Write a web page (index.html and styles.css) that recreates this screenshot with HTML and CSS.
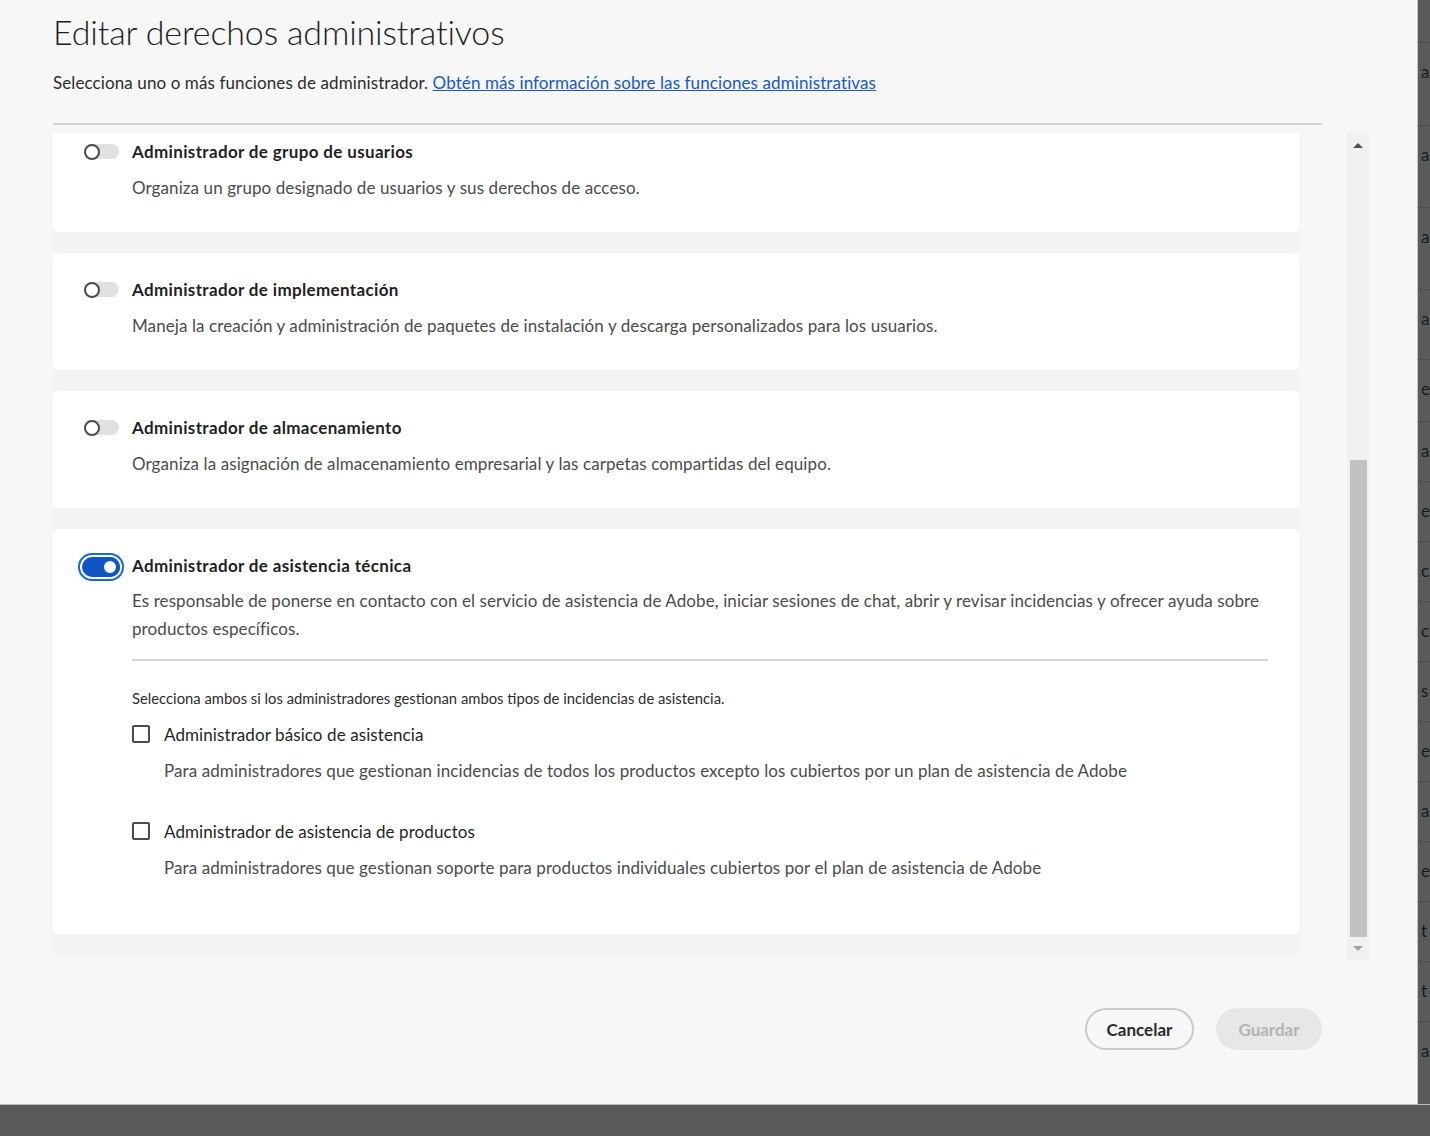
FILE: index.html
```html
<!DOCTYPE html>
<html lang="es">
<head>
<meta charset="utf-8">
<title>Editar derechos administrativos</title>
<link rel="stylesheet" href="styles.css">
</head>
<body>
<div class="page">
  <div class="top">
    <section class="dialog">
      <h1 class="title">Editar derechos administrativos</h1>
      <p class="subtitle">Selecciona uno o más funciones de administrador. <a href="#" class="link">Obtén más información sobre las funciones administrativas</a></p>
      <div class="divider"></div>
      <div class="scroll-row">
        <div class="viewport">
          <div class="list">
            <div class="card">
              <span class="switch"><span class="thumb"></span></span>
              <div class="card-body">
                <div class="card-title">Administrador de grupo de usuarios</div>
                <div class="card-desc">Organiza un grupo designado de usuarios y sus derechos de acceso.</div>
              </div>
            </div>
            <div class="card">
              <span class="switch"><span class="thumb"></span></span>
              <div class="card-body">
                <div class="card-title">Administrador de implementación</div>
                <div class="card-desc">Maneja la creación y administración de paquetes de instalación y descarga personalizados para los usuarios.</div>
              </div>
            </div>
            <div class="card">
              <span class="switch"><span class="thumb"></span></span>
              <div class="card-body">
                <div class="card-title">Administrador de almacenamiento</div>
                <div class="card-desc">Organiza la asignación de almacenamiento empresarial y las carpetas compartidas del equipo.</div>
              </div>
            </div>
            <div class="card card-open">
              <span class="switch-ring"><span class="switch switch-on"><span class="thumb"></span></span></span>
              <div class="card-body">
                <div class="card-title">Administrador de asistencia técnica</div>
                <div class="card-desc">Es responsable de ponerse en contacto con el servicio de asistencia de Adobe, iniciar sesiones de chat, abrir y revisar incidencias y ofrecer ayuda sobre productos específicos.</div>
                <div class="sub-divider"></div>
                <div class="hint">Selecciona ambos si los administradores gestionan ambos tipos de incidencias de asistencia.</div>
                <div class="option">
                  <div class="option-head"><span class="checkbox"></span><span class="option-label">Administrador básico de asistencia</span></div>
                  <div class="option-desc">Para administradores que gestionan incidencias de todos los productos excepto los cubiertos por un plan de asistencia de Adobe</div>
                </div>
                <div class="option">
                  <div class="option-head"><span class="checkbox"></span><span class="option-label">Administrador de asistencia de productos</span></div>
                  <div class="option-desc">Para administradores que gestionan soporte para productos individuales cubiertos por el plan de asistencia de Adobe</div>
                </div>
              </div>
            </div>
          </div>
        </div>
        <div class="scrollbar">
          <div class="sb-btn"><span class="arrow-up"></span></div>
          <div class="sb-track"><div class="sb-thumb"></div></div>
          <div class="sb-btn sb-btn-bottom"><span class="arrow-down"></span></div>
        </div>
      </div>
      <div class="actions">
        <button class="btn btn-secondary">Cancelar</button>
        <button class="btn btn-disabled">Guardar</button>
      </div>
    </section>
    <aside class="behind">
      <div class="brow r1"></div>
      <div class="brow r2">a</div>
      <div class="brow r3">a</div>
      <div class="brow r3">a</div>
      <div class="brow r4">a</div>
      <div class="brow r5">e</div>
      <div class="brow">a</div>
      <div class="brow">e</div>
      <div class="brow">c</div>
      <div class="brow">c</div>
      <div class="brow">s</div>
      <div class="brow">e</div>
      <div class="brow">a</div>
      <div class="brow">e</div>
      <div class="brow">t</div>
      <div class="brow">t</div>
      <div class="brow">a</div>
    </aside>
  </div>
  <div class="bottom"></div>
</div>
</body>
</html>
```

FILE: styles.css
```css
* { box-sizing: border-box; }
html, body { margin: 0; padding: 0; }
body {
  font-family: "Lato", "Liberation Sans", sans-serif;
  color: #2c2c2c;
  background: #595959;
}
.page {
  width: 1430px;
  height: 1136px;
  display: flex;
  flex-direction: column;
  overflow: hidden;
}
.top {
  display: flex;
  height: 1104px;
  flex-shrink: 0;
}
.dialog {
  width: 1418px;
  flex-shrink: 0;
  background: #f7f7f7;
  border-right: 1px solid #c4c4c4;
  padding: 12px 0 0 53px;
  display: flex;
  flex-direction: column;
  align-items: flex-start;
}
.title {
  margin: 0;
  font-size: 34px;
  line-height: 40px;
  font-weight: 300;
  color: #1e1e1e;
  letter-spacing: -0.15px;
}
.subtitle {
  margin: 19px 0 0;
  font-size: 17px;
  line-height: 24px;
  color: #2c2c2c;
  letter-spacing: 0.1px;
}
.link { color: #1559c7; text-decoration: underline; }
.divider {
  width: 1269px;
  height: 2px;
  background: #d3d3d3;
  margin-top: 28px;
}
.scroll-row {
  margin-top: 8px;
  width: 1317px;
  height: 827px;
  display: flex;
  gap: 48px;
}
.viewport {
  width: 1246px;
  height: 100%;
  overflow: hidden;
  display: flex;
  flex-direction: column;
  justify-content: flex-end;
  padding-bottom: 5px;
}
.list {
  flex-shrink: 0;
  background: #f3f3f3;
  display: flex;
  flex-direction: column;
  gap: 21px;
  padding-bottom: 21px;
}
.card {
  background: #fff;
  border-radius: 5px;
  display: flex;
  align-items: flex-start;
  padding: 25px 31px 30px 31px;
}
.card-open { padding-bottom: 52px; }
.switch {
  flex-shrink: 0;
  width: 35px;
  height: 15px;
  margin-top: 4px;
  border-radius: 8px;
  background: #e1e1e1;
  display: flex;
  align-items: center;
}
.switch .thumb {
  width: 16px;
  height: 16px;
  border-radius: 50%;
  background: #fff;
  border: 2px solid #4b4b4b;
}
.switch-ring {
  flex-shrink: 0;
  margin: -1px -5px 0 -6px;
  padding: 2px;
  border: 2px solid #1669dc;
  border-radius: 15px;
  display: flex;
}
.switch-ring .switch { margin-top: 0; }
.switch-on {
  width: 38px;
  height: 20px;
  border-radius: 10px;
  background: #0d56c4;
  justify-content: flex-end;
}
.switch-on .thumb {
  width: 20px;
  height: 20px;
  border: 4px solid #0d56c4;
}
.card-body {
  flex: 1;
  margin-left: 13px;
}
.card-title {
  font-size: 17px;
  line-height: 24px;
  font-weight: 700;
  color: #1f1f1f;
  letter-spacing: 0.35px;
}
.card-desc {
  margin-top: 10px;
  font-size: 17px;
  line-height: 28px;
  color: #4b4b4b;
  letter-spacing: 0.09px;
}
.card-open .card-desc { margin-top: 9px; }
.sub-divider {
  height: 2px;
  background: #d7d7d7;
  margin-top: 16px;
}
.hint {
  margin-top: 27px;
  font-size: 14.8px;
  line-height: 20px;
  color: #2c2c2c;
}
.option { margin-top: 14px; }
.option + .option { margin-top: 34px; }
.option-head {
  display: flex;
  align-items: center;
  height: 24px;
}
.checkbox {
  width: 18px;
  height: 18px;
  border: 2px solid #4b4b4b;
  border-radius: 2px;
  background: #fff;
  flex-shrink: 0;
}
.option-label {
  margin-left: 14px;
  font-size: 17px;
  color: #1f1f1f;
  letter-spacing: 0.09px;
}
.option-desc {
  margin: 11px 0 0 32px;
  font-size: 17px;
  line-height: 28px;
  color: #4b4b4b;
  letter-spacing: 0.09px;
}
.scrollbar {
  width: 22px;
  height: 100%;
  background: #f1f1f1;
  display: flex;
  flex-direction: column;
}
.sb-btn {
  height: 24px;
  display: flex;
  align-items: center;
  justify-content: center;
  flex-shrink: 0;
}
.sb-btn-bottom { height: 23px; }
.arrow-up {
  width: 0; height: 0;
  border-left: 5px solid transparent;
  border-right: 5px solid transparent;
  border-bottom: 5px solid #505050;
}
.arrow-down {
  width: 0; height: 0;
  border-left: 5px solid transparent;
  border-right: 5px solid transparent;
  border-top: 5px solid #a3a3a3;
}
.sb-track {
  flex: 1;
  display: flex;
  flex-direction: column;
  justify-content: flex-end;
  padding: 0 2px 0 3px;
}
.sb-thumb {
  height: 477px;
  background: #c1c1c1;
}
.actions {
  width: 1269px;
  margin-top: 48px;
  display: flex;
  justify-content: flex-end;
  gap: 22px;
}
.btn {
  height: 42px;
  border-radius: 21px;
  font-family: inherit;
  font-size: 17px;
  font-weight: 700;
  padding: 0 16px;
}
.btn-secondary {
  width: 109px;
  background: transparent;
  border: 2px solid #cacaca;
  color: #2c2c2c;
}
.btn-disabled {
  width: 106px;
  background: #e7e7e7;
  border: 2px solid #e7e7e7;
  color: #b3b3b3;
}
.behind {
  flex: 1;
  background: #5a5a5a;
  overflow: hidden;
  display: flex;
  flex-direction: column;
}
.brow {
  height: 60px;
  flex-shrink: 0;
  border-top: 1px solid #4d4d4d;
  font-size: 17px;
  line-height: 58px;
  color: #1a1a1a;
  padding-left: 3px;
  white-space: nowrap;
}
.r1 { height: 42px; border-top: 0; }
.r2 { height: 83px; }
.r3 { height: 82px; }
.r4 { height: 70px; }
.r5 { height: 62px; }
.bottom {
  flex: 1;
  background: #595959;
  border-top: 1px solid #b9b9b9;
}
```
